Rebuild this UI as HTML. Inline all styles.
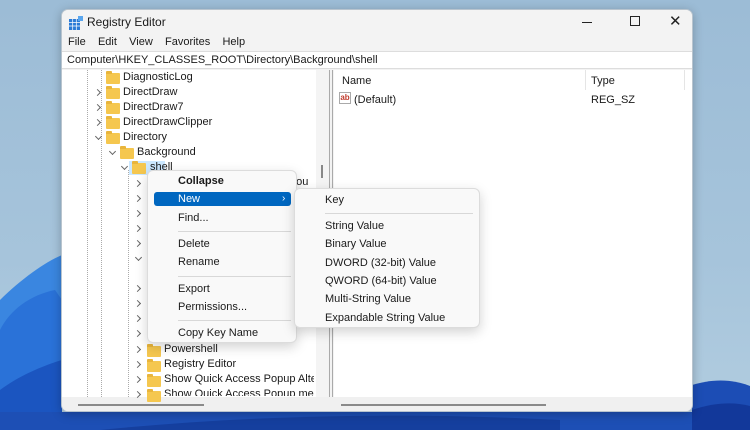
<!DOCTYPE html>
<html><head><meta charset="utf-8"><style>
*{margin:0;padding:0;box-sizing:border-box}
body{width:750px;height:430px;overflow:hidden;position:relative;font-family:"Liberation Sans",sans-serif;font-size:11px;color:#1a1a1a;
background:linear-gradient(180deg,#9cbcd6 0%,#a6c4db 60%,#b2cde0 100%)}
.a{position:absolute;white-space:nowrap}
.win{position:absolute;left:61px;top:9px;width:632px;height:403px;background:#f3f3f3;border:1px solid #b8c4ce;border-radius:7px;overflow:hidden;box-shadow:0 2px 10px rgba(0,0,0,.25)}
.fold{position:absolute;width:14px;height:11px;background:#f5c74f;border-radius:1px}
.fold:before{content:"";position:absolute;left:0;top:-2px;width:6px;height:3px;background:#e9b53c;border-radius:1px 1px 0 0}
.chev{position:absolute;width:5px;height:5px;border-right:1px solid #666;border-bottom:1px solid #666}
.r{transform:rotate(-45deg)}.d{transform:rotate(45deg)}
.menu{position:absolute;background:#f9f9f9;border:1px solid #dcdcdc;border-radius:6px;box-shadow:0 4px 12px rgba(0,0,0,.18)}
.sep{position:absolute;height:1px;background:#d8d8d8}
</style></head><body>
<svg class="a" style="left:0;top:0" width="750" height="430">
<path d="M0 300 C20 280 45 262 62 255 L62 430 L0 430Z" fill="#3a86e0"/>
<path d="M0 330 C10 310 30 295 55 290 L62 300 L62 430 L0 430Z" fill="#2a72d8"/>
<path d="M0 390 C20 375 45 365 62 360 L62 430 L0 430Z" fill="#1b55c0"/>
<path d="M0 412 L750 412 L750 430 L0 430Z" fill="#1d4fb5"/>
<path d="M100 430 C250 415 400 412 560 420 L560 430Z" fill="#153f9e"/>
<path d="M692 385 C715 378 735 380 750 386 L750 430 L692 430Z" fill="#1c4db5"/>
<path d="M692 410 C715 402 735 402 750 406 L750 430 L692 430Z" fill="#12389a"/>
</svg>
<div class="win">
 <div class="a" style="left:0;top:0;width:632px;height:32px;background:#f3f3f3"></div>
 <svg class="a" style="left:7px;top:6px" width="14" height="14"><rect x="0" y="3" width="11" height="11" fill="#2a7ad6"/><g stroke="#fff" stroke-width=".7"><line x1="0" y1="6.5" x2="11" y2="6.5"/><line x1="0" y1="10" x2="11" y2="10"/><line x1="3.7" y1="3" x2="3.7" y2="14"/><line x1="7.3" y1="3" x2="7.3" y2="14"/></g><rect x="9" y="0" width="5" height="5" fill="#5aa6ee"/></svg>
 <div class="a" style="left:25px;top:5px;font-size:12px">Registry Editor</div>
 <div class="a" style="left:520px;top:12px;width:10px;height:1px;background:#222"></div>
 <div class="a" style="left:568px;top:6px;width:10px;height:10px;border:1px solid #222"></div>
 <div class="a" style="left:607px;top:2px;font-size:15px;color:#222">✕</div>
 <div class="a" style="left:6px;top:26px;font-size:11px">File&nbsp;&nbsp;&nbsp; Edit&nbsp;&nbsp;&nbsp; View&nbsp;&nbsp;&nbsp; Favorites&nbsp;&nbsp;&nbsp; Help</div>
 <div class="a" style="left:0;top:41px;width:632px;height:18px;background:#fff;border-top:1px solid #ddd;border-bottom:1px solid #ddd"></div>
 <div class="a" style="left:5px;top:44px;font-size:11px">Computer\HKEY_CLASSES_ROOT\Directory\Background\shell</div>
 <div class="a" style="left:0;top:60px;width:266px;height:327px;background:#fff"></div>
 <div class="a" style="left:254px;top:60px;width:12px;height:327px;background:#f4f4f4"></div>
 <div class="a" style="left:259px;top:155px;width:2px;height:13px;background:#888"></div>
 <div class="a" style="left:272px;top:60px;width:359px;height:327px;background:#fff"></div>
 <div class="a" style="left:267px;top:60px;width:1px;height:343px;background:#aaa"></div>
 <div class="a" style="left:270px;top:60px;width:1px;height:343px;background:#aaa"></div>
 <div class="a" style="left:0;top:387px;width:632px;height:16px;background:#f0f0f0"></div>
 <div class="a" style="left:16px;top:394px;width:126px;height:2px;background:#8a8a8a"></div>
 <div class="a" style="left:279px;top:394px;width:205px;height:2px;background:#8a8a8a"></div>
 <div class="a" style="left:25px;top:60px;height:327px;border-left:1px dotted #aaa"></div>
 <div class="a" style="left:39px;top:60px;height:327px;border-left:1px dotted #aaa"></div>
 <div class="a" style="left:66px;top:160px;height:227px;border-left:1px dotted #aaa"></div>
 <div class="a" style="left:280px;top:65px;font-size:11px">Name</div>
 <div class="a" style="left:523px;top:60px;width:1px;height:20px;background:#e5e5e5"></div>
 <div class="a" style="left:622px;top:60px;width:1px;height:20px;background:#e5e5e5"></div>
 <div class="a" style="left:529px;top:65px;font-size:11px">Type</div>
 <div class="a" style="left:277px;top:82px;width:12px;height:12px;border:1px solid #aaa;background:#fff;font-size:8px;color:#c0392b;font-weight:bold;line-height:9px;text-align:center">ab</div>
 <div class="a" style="left:292px;top:84px;font-size:11px">(Default)</div>
 <div class="a" style="left:529px;top:84px;font-size:11px">REG_SZ</div>
</div>
<div class="a" style="left:0;top:0;width:750px;height:430px">
 <div class="a" style="left:129px;top:161px;width:36px;height:14px;background:#cce8ff"></div>
 <div class="fold" style="left:106px;top:73px"></div><div class="a" style="left:123px;top:71px">DiagnosticLog</div>
 <div class="chev r" style="left:95px;top:90px"></div><div class="fold" style="left:106px;top:88px"></div><div class="a" style="left:123px;top:86px">DirectDraw</div>
 <div class="chev r" style="left:95px;top:105px"></div><div class="fold" style="left:106px;top:103px"></div><div class="a" style="left:123px;top:101px">DirectDraw7</div>
 <div class="chev r" style="left:95px;top:120px"></div><div class="fold" style="left:106px;top:118px"></div><div class="a" style="left:123px;top:116px">DirectDrawClipper</div>
 <div class="chev d" style="left:96px;top:134px"></div><div class="fold" style="left:106px;top:133px"></div><div class="a" style="left:123px;top:131px">Directory</div>
 <div class="chev d" style="left:110px;top:149px"></div><div class="fold" style="left:120px;top:148px"></div><div class="a" style="left:137px;top:146px">Background</div>
 <div class="chev d" style="left:122px;top:164px"></div><div class="fold" style="left:132px;top:163px"></div><div class="a" style="left:150px;top:161px">shell</div>
 <div class="a" style="left:290px;top:176px">pou</div>
 <div class="chev r" style="left:135px;top:181px"></div><div class="chev r" style="left:135px;top:196px"></div><div class="chev r" style="left:135px;top:211px"></div><div class="chev r" style="left:135px;top:226px"></div><div class="chev r" style="left:135px;top:241px"></div>
 <div class="chev d" style="left:136px;top:255px"></div>
 <div class="chev r" style="left:135px;top:286px"></div><div class="chev r" style="left:135px;top:301px"></div><div class="chev r" style="left:135px;top:316px"></div><div class="chev r" style="left:135px;top:331px"></div>
 <div class="chev r" style="left:135px;top:347px"></div><div class="fold" style="left:147px;top:346px"></div><div class="a" style="left:164px;top:343px">Powershell</div>
 <div class="chev r" style="left:135px;top:362px"></div><div class="fold" style="left:147px;top:361px"></div><div class="a" style="left:164px;top:358px">Registry Editor</div>
 <div class="chev r" style="left:135px;top:377px"></div><div class="fold" style="left:147px;top:376px"></div><div class="a" style="left:164px;top:373px;width:150px;overflow:hidden">Show Quick Access Popup Alternative</div>
 <div class="chev r" style="left:135px;top:392px"></div><div class="fold" style="left:147px;top:391px"></div><div class="a" style="left:164px;top:388px;width:150px;height:8px;overflow:hidden">Show Quick Access Popup menu</div>
</div>
<div class="menu" style="left:147px;top:170px;width:150px;height:173px">
 <div class="a" style="left:30px;top:4px;font-weight:bold">Collapse</div>
 <div class="a" style="left:6px;top:21px;width:137px;height:14px;background:#0067c0;border-radius:3px"></div>
 <div class="a" style="left:30px;top:22px;color:#fff">New</div>
 <div class="a" style="left:134px;top:22px;color:#fff;font-size:10px">›</div>
 <div class="a" style="left:30px;top:41px">Find...</div>
 <div class="sep" style="left:30px;top:60px;width:113px"></div>
 <div class="a" style="left:30px;top:67px">Delete</div>
 <div class="a" style="left:30px;top:85px">Rename</div>
 <div class="sep" style="left:30px;top:105px;width:113px"></div>
 <div class="a" style="left:30px;top:112px">Export</div>
 <div class="a" style="left:30px;top:130px">Permissions...</div>
 <div class="sep" style="left:30px;top:149px;width:113px"></div>
 <div class="a" style="left:30px;top:156px">Copy Key Name</div>
</div>
<div class="menu" style="left:294px;top:188px;width:186px;height:140px">
 <div class="a" style="left:30px;top:5px">Key</div>
 <div class="sep" style="left:30px;top:24px;width:148px"></div>
 <div class="a" style="left:30px;top:31px">String Value</div>
 <div class="a" style="left:30px;top:49px">Binary Value</div>
 <div class="a" style="left:30px;top:68px">DWORD (32-bit) Value</div>
 <div class="a" style="left:30px;top:86px">QWORD (64-bit) Value</div>
 <div class="a" style="left:30px;top:104px">Multi-String Value</div>
 <div class="a" style="left:30px;top:123px">Expandable String Value</div>
</div>
</body></html>
